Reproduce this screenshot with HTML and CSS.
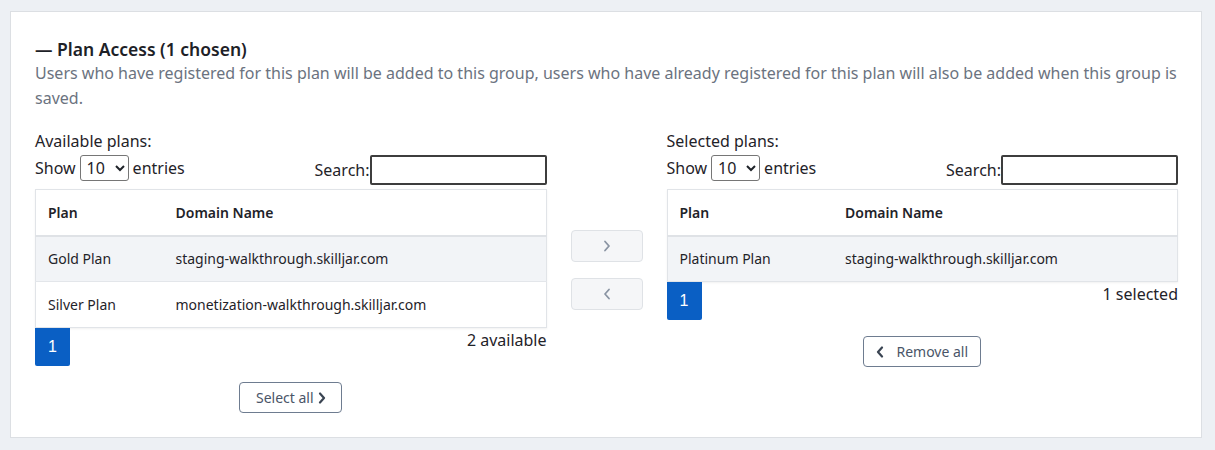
FILE: index.html
```html
<!DOCTYPE html>
<html lang="en">
<head>
<meta charset="utf-8">
<title>Plan Access</title>
<link rel="stylesheet" href="styles.css">
</head>
<body>
<div class="card">
  <h2 class="title">— Plan Access (1 chosen)</h2>
  <p class="desc">Users who have registered for this plan will be added to this group, users who have already registered for this plan will also be added when this group is saved.</p>
  <div class="picker">
    <div class="panel">
      <div class="label">Available plans:</div>
      <div class="controls">
        <label class="show">Show <select class="entries"><option>10</option><option>25</option></select> entries</label>
        <label class="search">Search:<input class="search-input" type="text"></label>
      </div>
      <table class="grid grid-left">
        <thead>
          <tr><th class="c1">Plan</th><th>Domain Name</th></tr>
        </thead>
        <tbody>
          <tr class="odd"><td>Gold Plan</td><td>staging-walkthrough.skilljar.com</td></tr>
          <tr><td>Silver Plan</td><td>monetization-walkthrough.skilljar.com</td></tr>
        </tbody>
      </table>
      <div class="foot">
        <span class="page">1</span>
        <span class="info">2 available</span>
      </div>
      <div class="action">
        <button class="btn-outline">Select all <svg class="chev-bold" width="8" height="12" viewBox="0 0 8 12"><path d="M2 1.5 L6 6 L2 10.5" fill="none" stroke="currentColor" stroke-width="2.2" stroke-linecap="round" stroke-linejoin="round"/></svg></button>
      </div>
    </div>
    <div class="mid">
      <button class="btn-move"><svg width="8" height="12" viewBox="0 0 8 12"><path d="M2 1.5 L6 6 L2 10.5" fill="none" stroke="currentColor" stroke-width="1.8" stroke-linecap="round" stroke-linejoin="round"/></svg></button>
      <button class="btn-move"><svg width="8" height="12" viewBox="0 0 8 12"><path d="M6 1.5 L2 6 L6 10.5" fill="none" stroke="currentColor" stroke-width="1.8" stroke-linecap="round" stroke-linejoin="round"/></svg></button>
    </div>
    <div class="panel">
      <div class="label">Selected plans:</div>
      <div class="controls">
        <label class="show">Show <select class="entries"><option>10</option><option>25</option></select> entries</label>
        <label class="search">Search:<input class="search-input" type="text"></label>
      </div>
      <table class="grid grid-right">
        <thead>
          <tr><th class="c1">Plan</th><th>Domain Name</th></tr>
        </thead>
        <tbody>
          <tr class="odd"><td>Platinum Plan</td><td>staging-walkthrough.skilljar.com</td></tr>
        </tbody>
      </table>
      <div class="foot">
        <span class="page">1</span>
        <span class="info">1 selected</span>
      </div>
      <div class="action">
        <button class="btn-outline btn-remove"><svg class="chev-bold" width="8" height="12" viewBox="0 0 8 12"><path d="M6 1.5 L2 6 L6 10.5" fill="none" stroke="currentColor" stroke-width="2.2" stroke-linecap="round" stroke-linejoin="round"/></svg> Remove all</button>
      </div>
    </div>
  </div>
</div>
</body>
</html>
```
FILE: styles.css
```css
* { box-sizing: border-box; }
html, body { margin: 0; padding: 0; }
body {
  background: #edf0f4;
  font-family: "Noto Sans", "Open Sans", sans-serif;
  color: #1f2329;
  padding: 11px 13px 12px 10px;
}
.card {
  background: #fff;
  border: 1px solid #dcdfe3;
  padding: 25px 23px 24px 24px;
}
.title {
  margin: 0;
  font-size: 17.5px;
  line-height: 24px;
  font-weight: 600;
  color: #1d2127;
}
.desc {
  margin: 0;
  font-size: 16px;
  line-height: 25px;
  color: #6b7380;
}
.picker {
  display: flex;
  margin-top: 19px;
}
.panel { flex: 1 1 0; min-width: 0; }
.mid {
  width: 120px;
  flex: 0 0 120px;
  display: flex;
  flex-direction: column;
  align-items: center;
  gap: 16px;
  padding-top: 100px;
}
.label {
  font-size: 16px;
  line-height: 22px;
}
.controls {
  display: flex;
  justify-content: space-between;
  align-items: center;
  height: 32px;
  margin-top: 2px;
  font-size: 16px;
}
.show { display: flex; align-items: center; gap: 4px; margin-top: -4px; }
.entries {
  font-family: "Noto Sans", sans-serif;
  font-size: 16px;
  height: 26px;
  width: 49px;
  border: 1px solid #767676;
  border-radius: 3px;
  background: #fff;
  color: #1f2329;
  padding: 0 2px;
}
.search { display: flex; align-items: center; }
.search-input {
  width: 177px;
  height: 30px;
  border: 2px solid #3d3d3d;
  border-radius: 2px;
  margin: 0;
}
.grid {
  width: 100%;
  border-collapse: collapse;
  margin-top: 3px;
  font-size: 14px;
  border: 1px solid #e1e4e8;
  box-shadow: 0 1px 2px rgba(0,0,0,0.06);
}
.grid th {
  text-align: left;
  font-weight: 600;
  height: 46px;
  padding: 0 12px;
  border-bottom: 2px solid #dfe2e6;
}
.grid td {
  height: 46px;
  padding: 0 12px;
  border-top: 1px solid #e3e6ea;
}
.grid tbody tr:first-child td { border-top: none; }
.grid .odd td { background: #f2f4f7; }
.grid-left .c1 { width: 128px; }
.grid-right .c1 { width: 166px; }
.foot {
  display: flex;
  justify-content: space-between;
  align-items: flex-start;
}
.page {
  width: 35px;
  height: 38px;
  background: #0a5fc4;
  color: #fff;
  display: flex;
  align-items: center;
  justify-content: center;
  font-family: "Liberation Sans", Arial, sans-serif;
  font-size: 16px;
  border-radius: 0 0 2px 2px;
}
.info {
  font-size: 16px;
  line-height: 24px;
}
.action {
  display: flex;
  justify-content: center;
  margin-top: 16px;
}
.btn-outline {
  font-family: "Noto Sans", sans-serif;
  font-size: 14px;
  color: #4a5568;
  background: #fff;
  border: 1px solid #6e7c90;
  border-radius: 4px;
  height: 31px;
  width: 103px;
  display: flex;
  align-items: center;
  justify-content: center;
  gap: 4px;
  padding: 0;
}
.btn-remove { width: 118px; gap: 12px; }
.chev-bold { color: #3a4452; }
.btn-move {
  width: 72px;
  height: 32px;
  background: #f5f6f8;
  border: 1px solid #dfe2e6;
  border-radius: 4px;
  color: #8a94a3;
  display: flex;
  align-items: center;
  justify-content: center;
  padding: 0;
}
```
